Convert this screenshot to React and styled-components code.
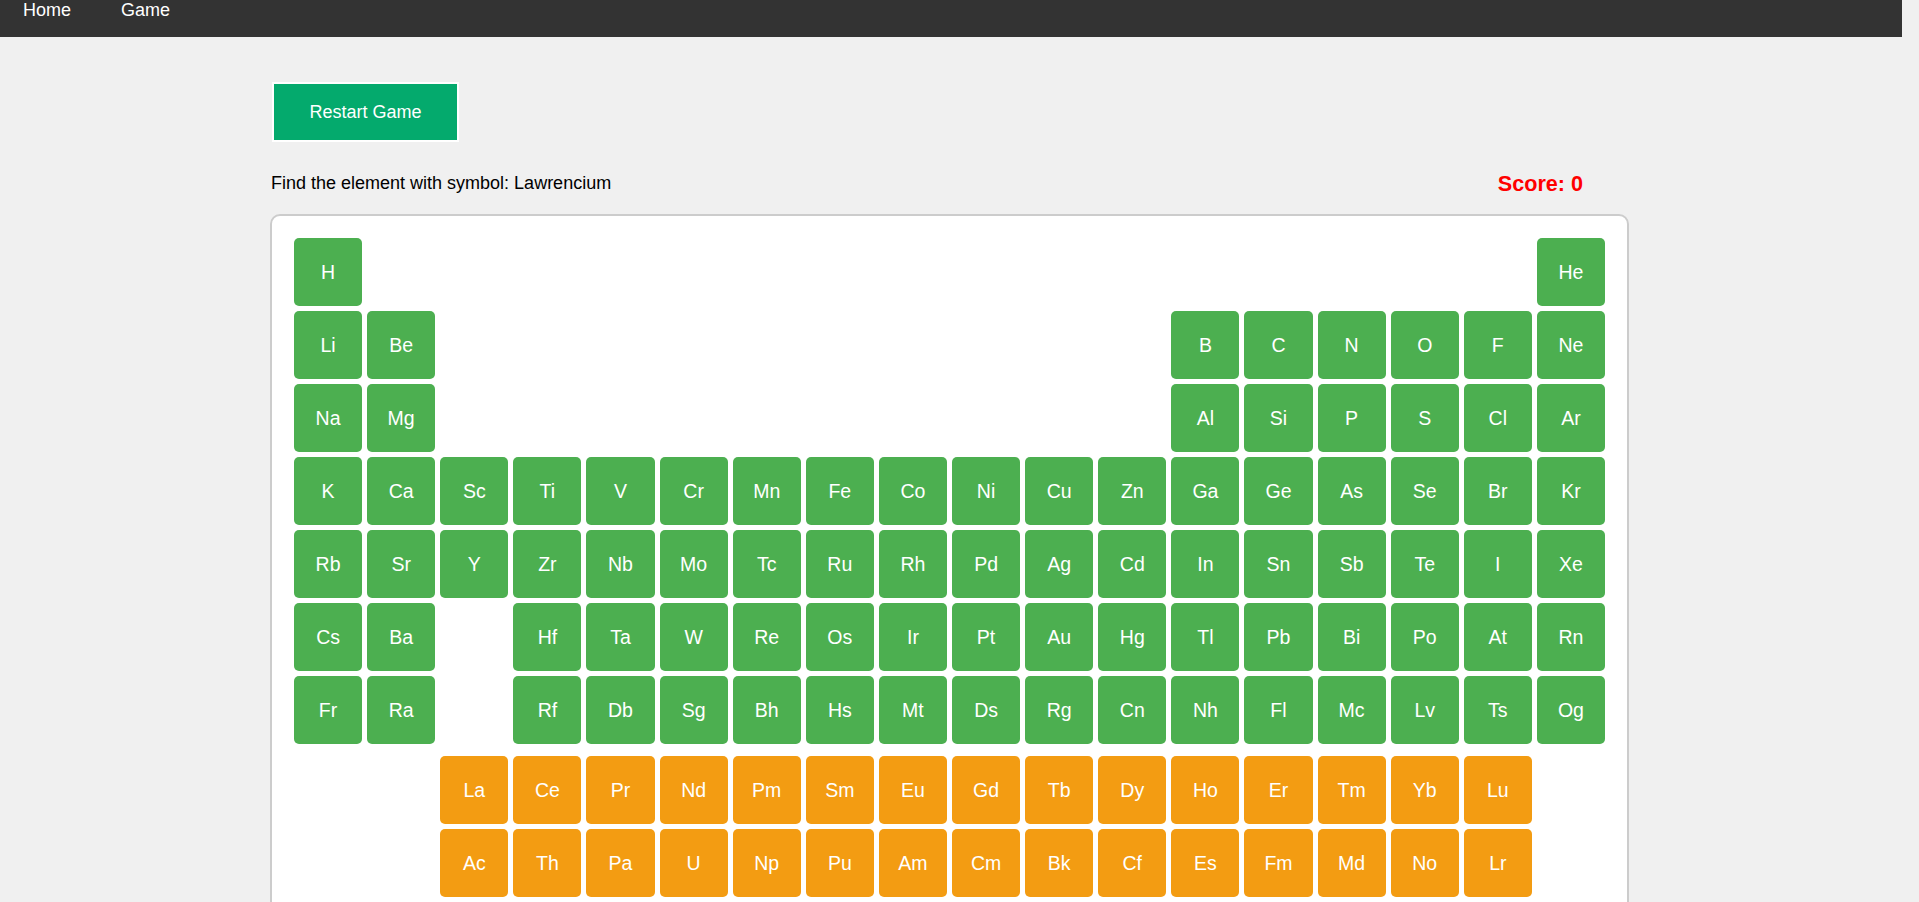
import styled, { createGlobalStyle } from 'styled-components';

const mainBlock = [
  ['H', 1, 1], ['He', 1, 18],
  ['Li', 2, 1], ['Be', 2, 2], ['B', 2, 13], ['C', 2, 14], ['N', 2, 15], ['O', 2, 16], ['F', 2, 17], ['Ne', 2, 18],
  ['Na', 3, 1], ['Mg', 3, 2], ['Al', 3, 13], ['Si', 3, 14], ['P', 3, 15], ['S', 3, 16], ['Cl', 3, 17], ['Ar', 3, 18],
  ...['K', 'Ca', 'Sc', 'Ti', 'V', 'Cr', 'Mn', 'Fe', 'Co', 'Ni', 'Cu', 'Zn', 'Ga', 'Ge', 'As', 'Se', 'Br', 'Kr'].map((s, i) => [s, 4, i + 1]),
  ...['Rb', 'Sr', 'Y', 'Zr', 'Nb', 'Mo', 'Tc', 'Ru', 'Rh', 'Pd', 'Ag', 'Cd', 'In', 'Sn', 'Sb', 'Te', 'I', 'Xe'].map((s, i) => [s, 5, i + 1]),
  ['Cs', 6, 1], ['Ba', 6, 2],
  ...['Hf', 'Ta', 'W', 'Re', 'Os', 'Ir', 'Pt', 'Au', 'Hg', 'Tl', 'Pb', 'Bi', 'Po', 'At', 'Rn'].map((s, i) => [s, 6, i + 4]),
  ['Fr', 7, 1], ['Ra', 7, 2],
  ...['Rf', 'Db', 'Sg', 'Bh', 'Hs', 'Mt', 'Ds', 'Rg', 'Cn', 'Nh', 'Fl', 'Mc', 'Lv', 'Ts', 'Og'].map((s, i) => [s, 7, i + 4]),
];

const fBlock = [
  ...['La', 'Ce', 'Pr', 'Nd', 'Pm', 'Sm', 'Eu', 'Gd', 'Tb', 'Dy', 'Ho', 'Er', 'Tm', 'Yb', 'Lu'].map((s, i) => [s, 1, i + 3]),
  ...['Ac', 'Th', 'Pa', 'U', 'Np', 'Pu', 'Am', 'Cm', 'Bk', 'Cf', 'Es', 'Fm', 'Md', 'No', 'Lr'].map((s, i) => [s, 2, i + 3]),
];

export default function App() {
  return (
    <Page>
      <GlobalStyle />
      <NavBar>
        <NavLink href="#">Home</NavLink>
        <NavLink href="#">Game</NavLink>
      </NavBar>
      <Container>
        <RestartButton>Restart Game</RestartButton>
        <InfoRow>
          <Question>Find the element with symbol: Lawrencium</Question>
          <Score>Score: 0</Score>
        </InfoRow>
        <Board>
          <TableGrid>
            {mainBlock.map(([sym, row, col]) => (
              <Tile key={sym} $row={row} $col={col}>{sym}</Tile>
            ))}
          </TableGrid>
          <FGrid>
            {fBlock.map(([sym, row, col]) => (
              <Tile key={sym} $row={row} $col={col} $inner>{sym}</Tile>
            ))}
          </FGrid>
        </Board>
      </Container>
    </Page>
  );
}

const GlobalStyle = createGlobalStyle`
  body {
    margin: 0;
    background: #f0f0f0;
    font-family: "Liberation Sans", Arial, sans-serif;
  }
`;

// keeps the 17px strip the browser's scrollbar takes in the reference
const Page = styled.div`
  padding-right: 17px;
  background: #f0f0f0;
`;

const NavBar = styled.nav`
  height: 37px;
  background: #333333;
  display: flex;
  align-items: flex-start;
  padding-left: 23px;
  gap: 50px;
`;

const NavLink = styled.a`
  color: #ffffff;
  font-size: 18px;
  text-decoration: none;
`;

const Container = styled.main`
  width: 1360px;
  margin: 0 auto;
  padding-top: 45px;
  padding-bottom: 61px;
`;

const RestartButton = styled.button`
  display: block;
  width: 187px;
  height: 60px;
  margin-left: 1px;
  background: #04aa6d;
  border: 2px solid #ffffff;
  color: #ffffff;
  font-family: "Liberation Sans", Arial, sans-serif;
  font-size: 18px;
  cursor: pointer;
`;

const InfoRow = styled.div`
  display: flex;
  justify-content: space-between;
  align-items: center;
  margin-top: 29px;
  padding-right: 48px;
  height: 25px;
`;

const Question = styled.p`
  margin: 0;
  font-size: 18px;
  color: #000000;
`;

const Score = styled.div`
  font-size: 21.6px;
  font-weight: bold;
  color: #ff0000;
`;

const Board = styled.section`
  margin: 18px 2px 0 -1px;
  background: #ffffff;
  border: 2px solid #cccccc;
  border-radius: 10px;
  padding: 22px;
`;

const TableGrid = styled.div`
  display: grid;
  grid-template-columns: repeat(18, 1fr);
  gap: 5px;
`;

const FGrid = styled(TableGrid)`
  margin-top: 12px;
`;

const Tile = styled.div`
  grid-row: ${props => props.$row};
  grid-column: ${props => props.$col};
  height: 68px;
  display: flex;
  align-items: center;
  justify-content: center;
  border-radius: 5px;
  background: ${props => props.$inner ? '#f39c12' : '#4caf50'};
  color: #ffffff;
  font-size: 19.5px;
  cursor: pointer;
`;
